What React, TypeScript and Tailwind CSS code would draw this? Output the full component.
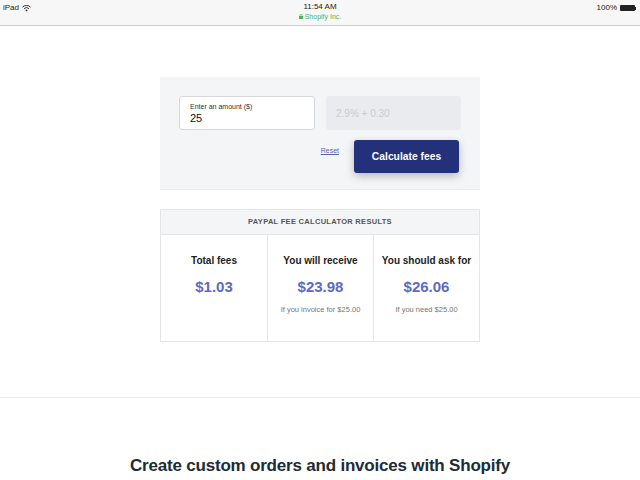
import React from "react";

export default function App() {
  const font = { fontFamily: '"Liberation Sans", Arial, sans-serif' } as React.CSSProperties;
  return (
    <div className="w-[640px] h-[480px] overflow-hidden bg-white" style={font}>
      {/* status bar */}
      <div className="h-[26px] bg-[#f7f7f7] border-b border-[#cfcfcf] relative flex flex-col items-center">
        <div className="absolute left-[3px] top-[2px] flex items-center gap-[3px] text-[8px] text-[#222]">
          <span>iPad</span>
          <svg width="9" height="7" viewBox="0 0 9 7">
            <path d="M0.5 2.2 A5.5 5.5 0 0 1 8.5 2.2" stroke="#333" strokeWidth="1" fill="none" />
            <path d="M2 3.7 A3.5 3.5 0 0 1 7 3.7" stroke="#333" strokeWidth="1" fill="none" />
            <path d="M4.5 6.5 L3.2 5 A2 2 0 0 1 5.8 5 Z" fill="#333" />
          </svg>
        </div>
        <div className="text-[8px] text-[#222] mt-[2px] leading-[10px]">11:54 AM</div>
        <div className="text-[7px] text-[#4fb35a] leading-[9px] flex items-center gap-[2px]">
          <svg width="4" height="5" viewBox="0 0 4 5"><rect x="0" y="2" width="4" height="3" fill="#4fb35a" /><path d="M1 2 V1.2 A1 1 0 0 1 3 1.2 V2" stroke="#4fb35a" strokeWidth="0.7" fill="none" /></svg>
          <span>Shopify Inc.</span>
        </div>
        <div className="absolute right-[4px] top-[2px] flex items-center gap-[3px] text-[8px] text-[#222]">
          <span>100%</span>
          <div className="flex items-center">
            <div className="w-[15px] h-[6px] bg-[#222] rounded-[1px]" />
            <div className="w-[1px] h-[3px] bg-[#222]" />
          </div>
        </div>
      </div>

      {/* content */}
      <div className="flex flex-col items-center pt-[51px]">
        <div className="w-[320px] h-[113px] bg-[#f4f5f7] border-b border-[#ebecef] px-[19px] pt-[19px]">
          <div className="flex gap-[11px]">
            <div className="w-[136px] h-[34px] bg-white border border-[#d6d8dc] rounded-[3px] px-[10px] pt-[5px]">
              <div className="text-[7px] text-[#333] leading-[9px]">Enter an amount ($)</div>
              <div className="text-[11px] text-[#111] leading-[13px] mt-[1px]">25</div>
            </div>
            <div className="w-[135px] h-[34px] bg-[#e9ebee] rounded-[3px] px-[10px] flex items-center">
              <span className="text-[10px] text-[#c9ccd1]">2.9% + 0.30</span>
            </div>
          </div>
          <div className="flex justify-end items-start mt-[10px] pr-[2px]">
            <span className="text-[7px] text-[#5a64a8] underline mt-[6px] mr-[15px]">Reset</span>
            <div className="w-[105px] h-[33px] bg-[#23307a] rounded-[3px] shadow-[0_3px_8px_rgba(0,0,0,0.25)] flex items-center justify-center text-white font-bold text-[10.3px]">
              Calculate fees
            </div>
          </div>
        </div>

        <div className="w-[320px] mt-[19px] border border-[#e3e5e8]">
          <div className="h-[25px] bg-[#f4f5f7] border-b border-[#e3e5e8] flex items-center justify-center text-[7.5px] font-bold text-[#555] tracking-[0.3px]">
            PAYPAL FEE CALCULATOR RESULTS
          </div>
          <div className="grid grid-cols-3 h-[106px]">
            <div className="flex flex-col items-center pt-[18px]">
              <div className="text-[10px] font-bold text-[#222]">Total fees</div>
              <div className="text-[15px] font-bold text-[#5c6ac4] mt-[8px]">$1.03</div>
            </div>
            <div className="flex flex-col items-center pt-[18px] border-l border-[#e3e5e8]">
              <div className="text-[10px] font-bold text-[#222]">You will receive</div>
              <div className="text-[15px] font-bold text-[#5c6ac4] mt-[8px]">$23.98</div>
              <div className="text-[7.5px] text-[#777] mt-[5px]">If you invoice for $25.00</div>
            </div>
            <div className="flex flex-col items-center pt-[18px] border-l border-[#e3e5e8]">
              <div className="text-[10px] font-bold text-[#222]">You should ask for</div>
              <div className="text-[15px] font-bold text-[#5c6ac4] mt-[8px]">$26.06</div>
              <div className="text-[7.5px] text-[#777] mt-[5px]">If you need $25.00</div>
            </div>
          </div>
        </div>
      </div>

      <div className="mt-[55px] border-t border-[#eeeeee]" />
      <div className="flex justify-center mt-[55px]">
        <h2 className="text-[17px] font-bold text-[#212b36] tracking-[-0.2px]">Create custom orders and invoices with Shopify</h2>
      </div>
    </div>
  );
}
